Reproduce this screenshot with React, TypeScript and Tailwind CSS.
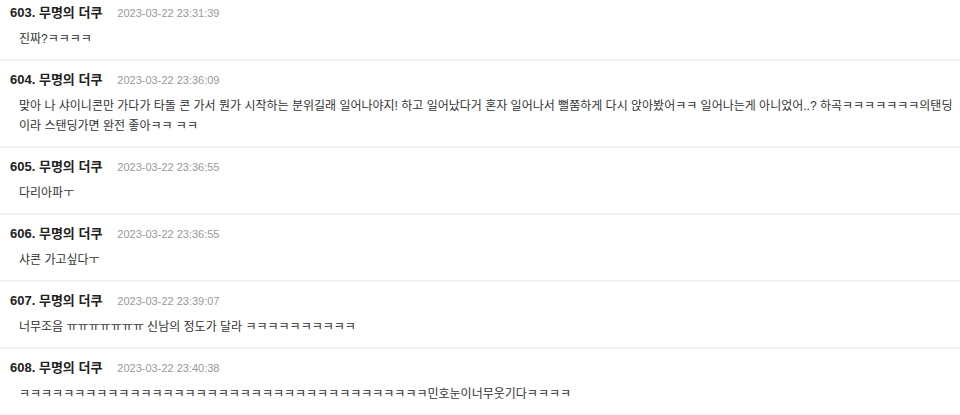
import React from "react";

type Comment = { no: number; date: string; body: React.ReactNode };

const comments: Comment[] = [
  { no: 603, date: "2023-03-22 23:31:39", body: "진짜?ㅋㅋㅋㅋ" },
  {
    no: 604,
    date: "2023-03-22 23:36:09",
    body: (
      <>
        맞아 나 샤이니콘만 가다가 타돌 콘 가서 뭔가 시작하는 분위길래 일어나야지! 하고 일어났다거 혼자 일어나서 뻘쭘하게 다시 앉아봤어ㅋㅋ 일어나는게 아니었어..? 하곡ㅋㅋㅋㅋㅋㅋㅋ의탠딩
        <br />
        이라 스탠딩가면 완전 좋아ㅋㅋ ㅋㅋ
      </>
    ),
  },
  { no: 605, date: "2023-03-22 23:36:55", body: "다리아파ㅜ" },
  { no: 606, date: "2023-03-22 23:36:55", body: "샤콘 가고싶다ㅜ" },
  { no: 607, date: "2023-03-22 23:39:07", body: "너무조음 ㅠㅠㅠㅠㅠㅠㅠ 신남의 정도가 달라 ㅋㅋㅋㅋㅋㅋㅋㅋㅋㅋ" },
  {
    no: 608,
    date: "2023-03-22 23:40:38",
    body: "ㅋ".repeat(37) + "민호눈이너무웃기다ㅋㅋㅋㅋ",
  },
];

export default function App() {
  return (
    <div
      className="w-[960px] h-[415px] overflow-hidden bg-white text-[#222]"
      style={{ fontFamily: '"Liberation Sans", "Noto Sans CJK KR", sans-serif' }}
    >
      {comments.map((c, i) => (
        <div
          key={c.no}
          className={`pl-[10px] pr-[10px] pb-[10px] border-b-2 border-[#f2f2f2] ${i === 0 ? "pt-[4px]" : "pt-[10px]"}`}
        >
          <div className="flex items-center h-[18px]">
            <span className="text-[13px] font-bold text-[#222]">{c.no}. 무명의 더쿠</span>
            <span className="ml-[15px] text-[11px] text-[#999]">{c.date}</span>
          </div>
          <div className="mt-[7px] pl-[9px] text-[12px] leading-[20px] text-[#333] whitespace-nowrap">
            {c.body}
          </div>
        </div>
      ))}
    </div>
  );
}
